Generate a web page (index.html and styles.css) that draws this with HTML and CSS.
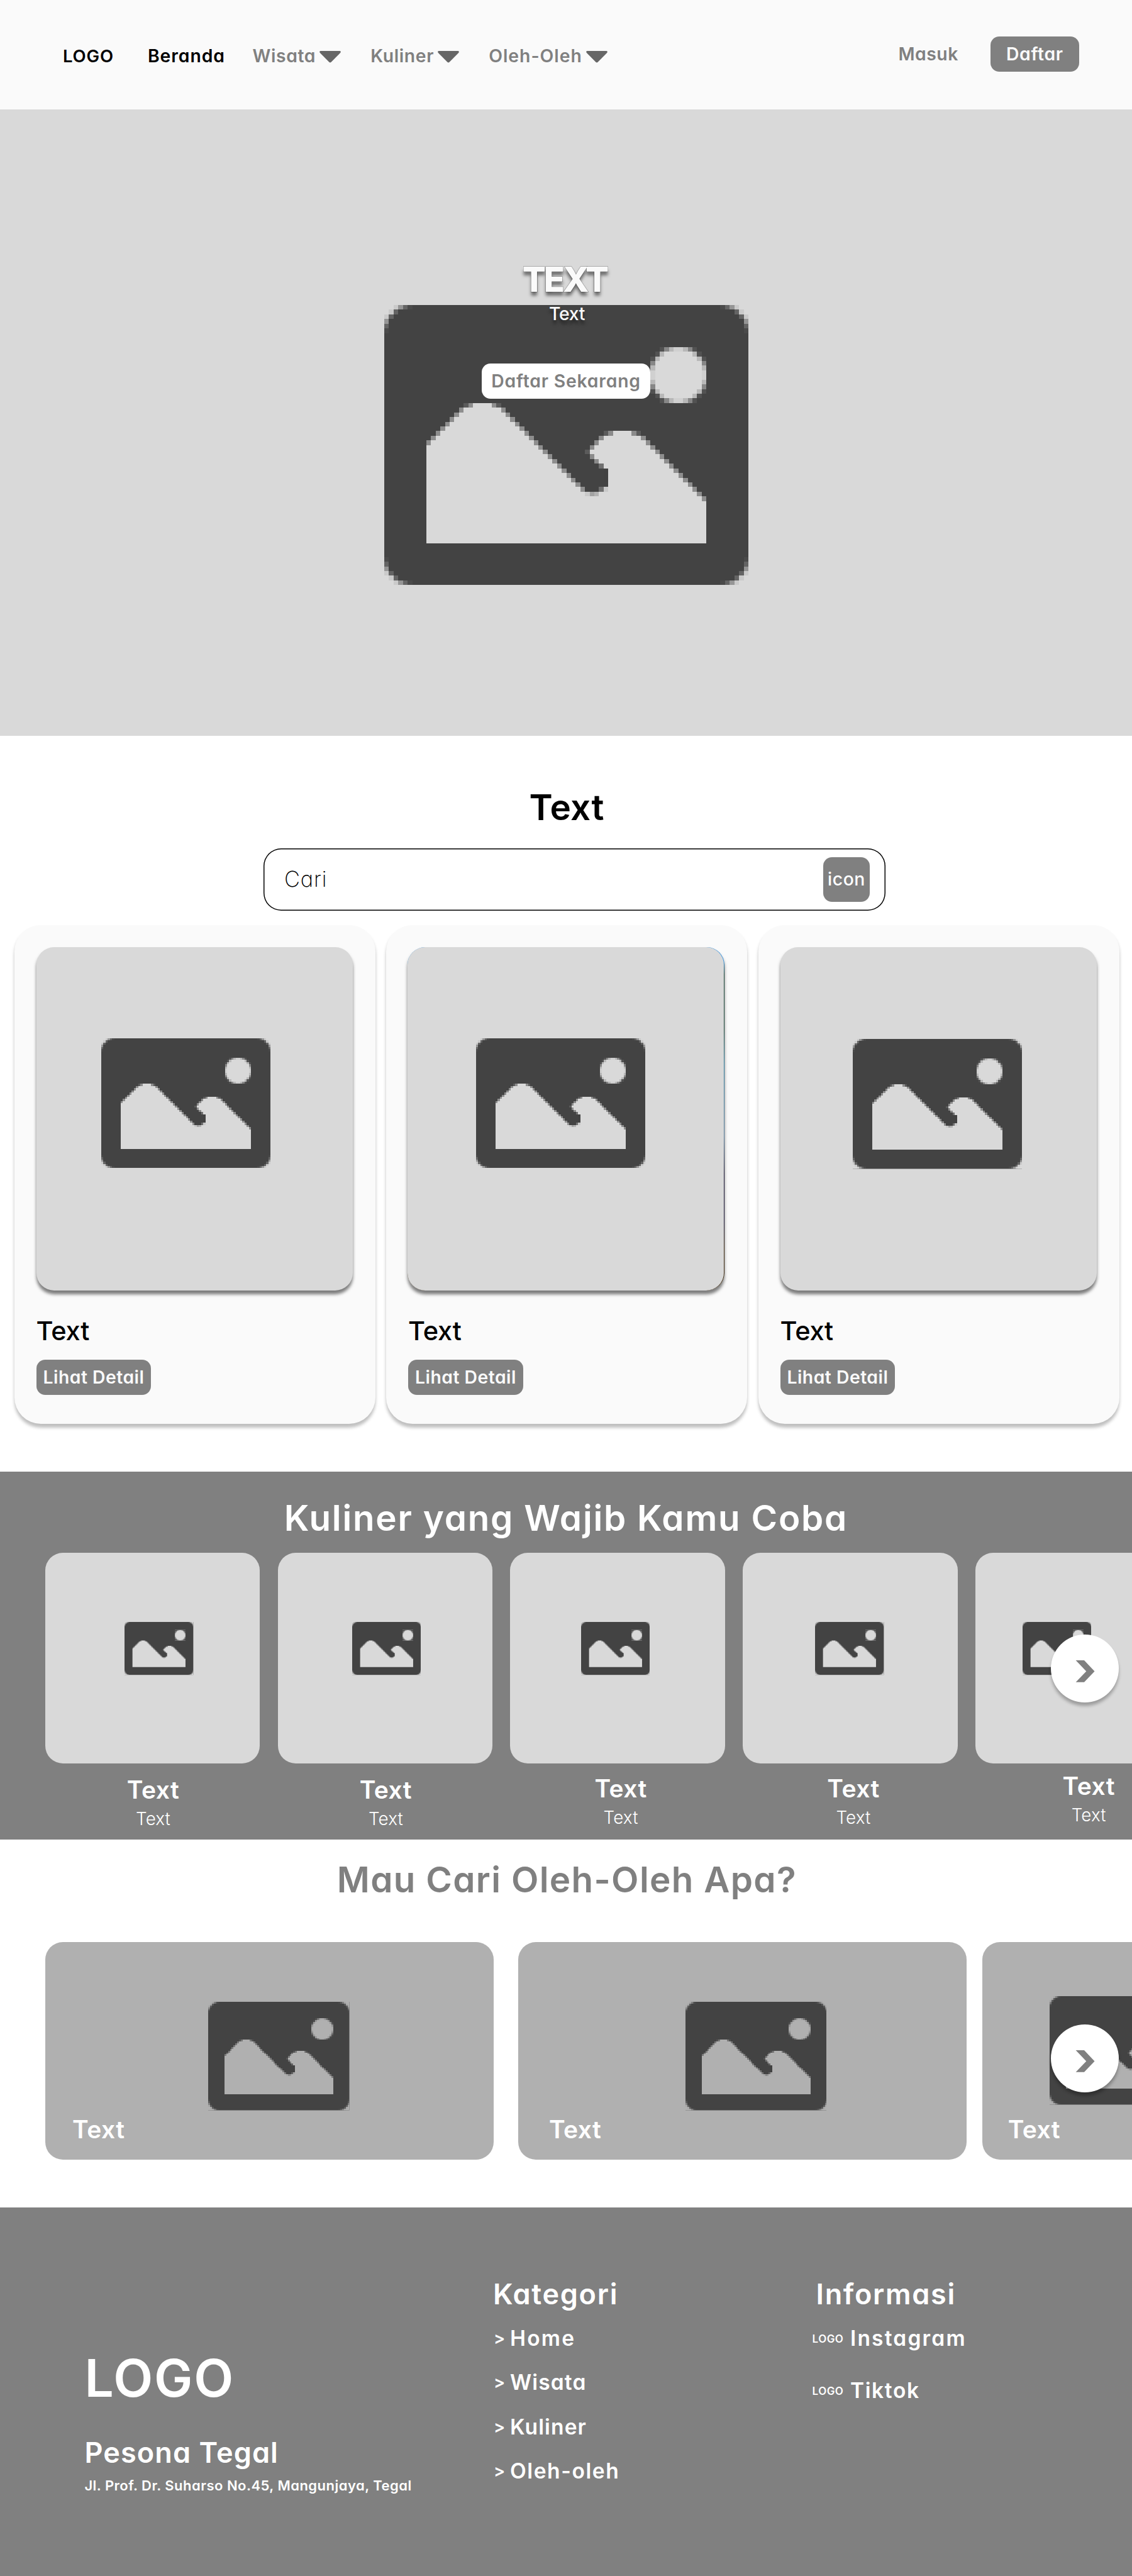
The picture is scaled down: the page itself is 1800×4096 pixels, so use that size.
FILE: index.html
```html
<!DOCTYPE html>
<html lang="id">
<head>
<meta charset="utf-8">
<title>Pesona Tegal</title>
<link rel="stylesheet" href="styles.css">
</head>
<body>
<svg class="defs" aria-hidden="true">
  <defs>
    <!-- stepped quarter-round corner on the 78x60 icon grid -->
    <g id="corner">
      <path d="M0 0h2v1h-1v1h-1z"/>
      <path opacity=".9" d="M2 0h1v1h-1zM0 2h1v1h-1zM1 1h1v1h-1z"/>
      <path opacity=".55" d="M3 0h1v1h-1zM0 3h1v1h-1z"/>
      <path opacity=".22" d="M4 0h1v1h-1zM0 4h1v1h-1zM2 1h1v1h-1zM1 2h1v1h-1z"/>
      <path opacity=".05" d="M5 0h1v1h-1zM0 5h1v1h-1z"/>
    </g>
    <symbol id="photo" viewBox="0 0 78 60" preserveAspectRatio="none">
      <rect width="78" height="60" fill="#434343"/>
      <g fill="currentColor">
        <use href="#corner"/>
        <use href="#corner" transform="translate(78 0) scale(-1 1)"/>
        <use href="#corner" transform="translate(0 60) scale(1 -1)"/>
        <use href="#corner" transform="translate(78 60) scale(-1 -1)"/>
        <rect x="57" y="9" width="12" height="12"/>
        <path d="M9 51V30H10V29H11V28H12V27H13V26H14V25H15V24H16V23H17V22H19V21H23V22H25V23H26V24H27V25H28V26H29V27H30V28H31V29H32V30H33V31H34V32H35V33H36V34H37V35H38V36H39V37H40V38H41V39H42V40H47V39H48V35H47V34H46V33H45V32H44V31H45V30H46V29H47V28H49V27H53V28H55V29H56V30H57V31H58V32H59V33H60V34H61V35H62V36H63V37H64V38H65V39H66V40H67V41H68V42H69V51Z"/>
        <path opacity=".5" d="M9 29h1v1h-1zm1-1h1v1h-1zm1-1h1v1h-1zm1-1h1v1h-1zm1-1h1v1h-1zm1-1h1v1h-1zm1-1h1v1h-1zm1-1h1v1h-1zm2-1h1v1h-1z"/>
        <path opacity=".5" d="M23 21h1v1h-1zm2 1h1v1h-1zm1 1h1v1h-1zm1 1h1v1h-1zm1 1h1v1h-1zm1 1h1v1h-1zm1 1h1v1h-1zm1 1h1v1h-1zm1 1h1v1h-1zm1 1h1v1h-1zm1 1h1v1h-1zm1 1h1v1h-1zm1 1h1v1h-1zm1 1h1v1h-1zm1 1h1v1h-1zm1 1h1v1h-1zm1 1h1v1h-1zm1 1h1v1h-1zm1 1h1v1h-1z"/>
        <path opacity=".5" d="M55 28h1v1h-1zm1 1h1v1h-1zm1 1h1v1h-1zm1 1h1v1h-1zm1 1h1v1h-1zm1 1h1v1h-1zm1 1h1v1h-1zm1 1h1v1h-1zm1 1h1v1h-1zm1 1h1v1h-1zm1 1h1v1h-1zm1 1h1v1h-1zm1 1h1v1h-1zm1 1h1v1h-1z"/>
        <path opacity=".48" d="M48 27h1v1h-1zM53 27h1v1h-1zM46 28h1v1h-1zM45 29h1v1h-1zM44 30h1v1h-1zM44 32h1v1h-1zM45 33h1v1h-1z"/>
        <path opacity=".3" d="M46 34h1v1h-1zM46 39h1v1h-1z"/>
        <path opacity=".16" d="M17 21h1v1h-1zM24 21h1v1h-1zM47 27h1v1h-1zM54 27h1v1h-1zM43 31h1v1h-1z"/>
      </g>
      <g fill="#434343">
        <path opacity=".45" d="M47 35h1v1h-1z"/>
        <path opacity=".93" d="M47 36h1v2h-1z"/>
        <path opacity=".65" d="M47 38h1v1h-1z"/>
        <path opacity=".1" d="M47 39h1v1h-1zM43 40h1v1h-1z"/>
        <path opacity=".36" d="M44 40h1v1h-1z"/>
        <path opacity=".25" d="M45 40h1v1h-1z"/>
        <use href="#corner" transform="translate(57 9)"/>
        <use href="#corner" transform="translate(69 9) scale(-1 1)"/>
        <use href="#corner" transform="translate(57 21) scale(1 -1)"/>
        <use href="#corner" transform="translate(69 21) scale(-1 -1)"/>
      </g>
    </symbol>
    <symbol id="caret" viewBox="0 0 34 19">
      <path fill="#666" d="M1.6 0H32.4Q34.8 .6 33.2 3L18.6 17.8Q17 19.2 15.4 17.8L.8 3Q-.8 .6 1.6 0Z"/>
    </symbol>
    <symbol id="next" viewBox="0 0 108.4 108.4">
      <path fill="#808080" d="M39.6 41H53L69.5 58.4 53 75.8H39.6L56.3 58.4Z"/>
    </symbol>
  </defs>
</svg>

<header class="header">
  <nav class="nav">
    <a class="brand">LOGO</a>
    <a class="active">Beranda</a>
    <a class="drop">Wisata<svg><use href="#caret"/></svg></a>
    <a class="drop">Kuliner<svg><use href="#caret"/></svg></a>
    <a class="drop oleh">Oleh-Oleh<svg><use href="#caret"/></svg></a>
  </nav>
  <div class="account">
    <a class="login">Masuk</a>
    <a class="button signup">Daftar</a>
  </div>
</header>

<section class="hero">
  <svg class="photo hero-photo"><use href="#photo"/></svg>
  <div class="hero-content">
    <h1>TEXT</h1>
    <p>Text</p>
    <a class="button hero-button">Daftar Sekarang</a>
  </div>
</section>

<section class="wisata">
  <h2>Text</h2>
  <div class="search"><span class="placeholder">Cari</span><span class="button search-button">icon</span></div>
  <div class="places">
    <article class="place">
      <div class="thumb"><svg class="photo"><use href="#photo"/></svg></div>
      <h3>Text</h3>
      <a class="button detail">Lihat Detail</a>
    </article>
    <article class="place">
      <div class="edge"><div class="thumb"><svg class="photo"><use href="#photo"/></svg></div></div>
      <h3>Text</h3>
      <a class="button detail">Lihat Detail</a>
    </article>
    <article class="place">
      <div class="thumb"><svg class="photo"><use href="#photo"/></svg></div>
      <h3>Text</h3>
      <a class="button detail">Lihat Detail</a>
    </article>
  </div>
</section>

<section class="kuliner">
  <h2>Kuliner yang Wajib Kamu Coba</h2>
  <div class="foods">
    <article class="food"><div class="plate"><svg class="photo"><use href="#photo"/></svg></div><div class="label"><h3>Text</h3><p>Text</p></div></article>
    <article class="food"><div class="plate"><svg class="photo"><use href="#photo"/></svg></div><div class="label"><h3>Text</h3><p>Text</p></div></article>
    <article class="food"><div class="plate"><svg class="photo"><use href="#photo"/></svg></div><div class="label"><h3>Text</h3><p>Text</p></div></article>
    <article class="food"><div class="plate"><svg class="photo"><use href="#photo"/></svg></div><div class="label"><h3>Text</h3><p>Text</p></div></article>
    <article class="food"><div class="plate"><svg class="photo"><use href="#photo"/></svg></div><div class="label"><h3>Text</h3><p>Text</p></div></article>
  </div>
  <svg class="next"><use href="#next"/></svg>
</section>

<section class="gifts-section">
  <h2>Mau Cari Oleh-Oleh Apa?</h2>
  <div class="gifts">
    <article class="gift"><svg class="photo"><use href="#photo"/></svg><h3>Text</h3></article>
    <article class="gift"><svg class="photo"><use href="#photo"/></svg><h3>Text</h3></article>
    <article class="gift"><svg class="photo"><use href="#photo"/></svg><h3>Text</h3></article>
  </div>
  <svg class="next"><use href="#next"/></svg>
</section>

<footer class="footer">
  <div class="about">
    <div class="footer-logo">LOGO</div>
    <h4>Pesona Tegal</h4>
    <p>Jl. Prof. Dr. Suharso No.45, Mangunjaya, Tegal</p>
  </div>
  <div class="links">
    <h4>Kategori</h4>
    <a class="home"><span>&gt;</span>Home</a>
    <a><span>&gt;</span>Wisata</a>
    <a><span>&gt;</span>Kuliner</a>
    <a class="oleh"><span>&gt;</span>Oleh-oleh</a>
  </div>
  <div class="social">
    <h4>Informasi</h4>
    <a class="instagram"><small>LOGO</small>Instagram</a>
    <a><small>LOGO</small>Tiktok</a>
  </div>
</footer>
</body>
</html>
```
FILE: styles.css
```css
* { box-sizing: border-box; margin: 0; padding: 0; }

body {
  width: 1800px;
  background: #fff;
  color: #000;
  font-family: Inter, "Open Sans", sans-serif;
  font-feature-settings: "cv11";
  font-size: 28.3px;
  font-weight: 600;
  line-height: 40px;
  overflow-x: hidden;
}

a, h1, h2, h3, h4, p, span, small { white-space: nowrap; }
svg { display: block; flex: none; }
.defs { position: absolute; width: 0; height: 0; }
.photo { color: #d9d9d9; shape-rendering: crispEdges; }

.button {
  display: flex;
  align-items: center;
  justify-content: center;
  border-radius: 14px;
  background: #808080;
  color: #fafafa;
}

/* Header */
.header {
  display: flex;
  justify-content: space-between;
  height: 174.4px;
  padding: 0 84.4px 0 100px;
  background: #fafafa;
  color: #808080;
}
.nav { display: flex; padding-top: 68.8px; }
.brand { margin-right: 54px; color: #000; font-size: 27.5px; letter-spacing: .0302em; }
.active { margin-right: 43.5px; color: #000; letter-spacing: .034em; }
.drop { display: flex; gap: 6.2px; margin-right: 47px; letter-spacing: .022em; }
.drop.oleh { letter-spacing: .0355em; }
.drop svg { width: 34px; height: 19px; margin-top: 12.4px; }
.account { display: flex; gap: 51.2px; padding-top: 57.7px; }
.login { line-height: 56.2px; letter-spacing: .0191em; }
.signup { width: 140.6px; height: 56.2px; letter-spacing: .0247em; }

/* Hero */
.hero { position: relative; height: 995.6px; background: #d9d9d9; }
.hero-photo { position: absolute; left: 611.2px; top: 310.8px; width: 579px; height: 445.3px; }
.hero-content {
  position: relative;
  display: flex;
  flex-direction: column;
  align-items: center;
  padding-top: 240.1px;
  color: #fafafa;
}
.hero h1 {
  margin-left: -4px;
  font-size: 54.7px;
  line-height: 60px;
  font-weight: 800;
  letter-spacing: -.0569em;
  -webkit-text-stroke: 1px #808080;
  paint-order: stroke fill;
  text-shadow: 0 5.6px 5.6px rgba(0, 0, 0, .5);
}
.hero p {
  margin-top: 4.2px;
  padding-left: 3px;
  font-weight: 550;
  letter-spacing: -.0087em;
  text-shadow: 0 5.6px 5.6px rgba(0, 0, 0, .5);
}
.hero-button {
  width: 267.6px;
  height: 56px;
  margin-top: 59.4px;
  background: #fff;
  color: #808080;
  letter-spacing: .0292em;
}

/* Section headings */
h2 {
  font-size: 56.5px;
  font-weight: 600;
  line-height: 70px;
  text-align: center;
}

/* Wisata */
.wisata { padding: 79.4px 20.5px 76.3px 22.6px; }
.wisata h2 { letter-spacing: .005em; }
.search {
  display: flex;
  align-items: center;
  justify-content: space-between;
  width: 989px;
  height: 99.8px;
  margin: 29.2px 0 0 396.4px;
  padding: 0 25.2px 0 33px;
  border-radius: 28px;
  box-shadow: inset 0 0 0 1.5px #000;
}
.placeholder { font-size: 34.5px; font-weight: 250; letter-spacing: .022em; }
.search-button { width: 73.7px; height: 70.4px; color: #fff; font-weight: 550; letter-spacing: .0217em; }
.places { display: flex; justify-content: space-between; margin-top: 22.6px; }
.place {
  width: 574px;
  height: 792.7px;
  padding: 35px 35px 0;
  border-radius: 42px;
  background: #fafafa;
  box-shadow: 0 5.6px 5.6px rgba(0, 0, 0, .25);
}
.thumb {
  width: 503.8px;
  height: 545.7px;
  padding: 144.8px 0 0 103.7px;
  border-radius: 28px;
  background: #d9d9d9;
  box-shadow: 0 5.6px 5.6px rgba(0, 0, 0, .5);
}
.edge {
  width: 504.8px;
  margin-left: -1.5px;
  border-radius: 28px;
  background: linear-gradient(#3b93dc 0 4%, #1d4a3c 8% 24%, #2f7f9f 34%, #5a7f9c 55%, #1d1a38 66% 80%, #3d2a12 88%);
  box-shadow: 0 5.6px 5.6px rgba(0, 0, 0, .5);
}
.edge .thumb { width: 503.2px; padding-left: 109.8px; box-shadow: none; }
.place:nth-child(3) .thumb { padding: 146.4px 0 0 115.1px; }
.place .photo { width: 269px; height: 206.6px; }
.place h3 {
  margin-top: 39.6px;
  font-size: 41.5px;
  font-weight: 500;
  line-height: 50px;
  letter-spacing: -.0047em;
}
.detail { width: 182.8px; height: 55.9px; margin-top: 20.4px; letter-spacing: .0178em; }

/* Kuliner */
.kuliner {
  position: relative;
  height: 584.8px;
  padding: 38.7px 0 0 71.7px;
  overflow: hidden;
  background: #808080;
  color: #fff;
}
.kuliner h2 { margin-left: -71.7px; letter-spacing: .0316em; }
.foods { display: flex; gap: 28.2px; margin-top: 20.8px; }
.food { flex: none; width: 341.7px; }
.plate {
  height: 334.6px;
  padding: 109.7px 0 0 126.5px;
  border-radius: 28px;
  background: #d9d9d9;
}
.plate .photo { width: 109.6px; height: 84.4px; shape-rendering: auto; }
.food:nth-child(2) .plate { padding-left: 118.3px; }
.food:nth-child(3) .plate { padding-left: 112.3px; }
.food:nth-child(4) .plate { padding-left: 114.8px; }
.food:nth-child(5) .plate { padding-left: 74.6px; }
.label { margin-left: 2px; padding-top: 19.8px; text-align: center; }
.food:nth-child(3) .label, .food:nth-child(4) .label { margin-left: 9.6px; padding-top: 18px; }
.food:nth-child(5) .label { margin: 0 -9.2px 0 9.2px; padding-top: 13.8px; }
.label h3 { font-size: 39px; font-weight: 600; line-height: 44px; letter-spacing: .012em; }
.label p { margin-top: 6px; font-size: 27.8px; font-weight: 300; line-height: 36px; letter-spacing: .0049em; }
.next {
  position: absolute;
  left: 1670.6px;
  top: 258.9px;
  width: 108.4px;
  height: 108.4px;
  border-radius: 50%;
  background: #fff;
  box-shadow: 0 5.6px 5.6px rgba(0, 0, 0, .28);
}

/* Oleh-oleh */
.gifts-section {
  position: relative;
  height: 585.2px;
  padding: 29px 0 0 71.7px;
  overflow: hidden;
}
.gifts-section h2 { margin-left: -69px; color: #808080; letter-spacing: .0238em; }
.gifts-section .next { top: 294.2px; }
.gifts { display: flex; margin-top: 64.4px; }
.gift {
  display: flex;
  flex: none;
  flex-direction: column;
  width: 713px;
  height: 345.8px;
  margin-right: 39.6px;
  padding: 95px 0 26px 43.4px;
  border-radius: 28px;
  background: #b0b0b0;
}
.gift .photo { width: 224.5px; height: 172.5px; margin-left: 216px; color: #b0b0b0; }
.gift h3 {
  margin-top: auto;
  color: #fff;
  font-size: 39px;
  font-weight: 600;
  line-height: 44px;
  letter-spacing: .012em;
}
.gift:nth-child(2) { margin-right: 25px; padding-left: 48.6px; }
.gift:nth-child(2) .photo { margin-left: 217.1px; }
.gift:nth-child(3) { padding: 86.3px 0 26px 40.4px; }
.gift:nth-child(3) .photo { margin-left: 66.8px; }

/* Footer */
.footer {
  display: grid;
  grid-template-columns: 649.6px 513.5px 1fr;
  height: 586px;
  padding-left: 134.4px;
  background: #808080;
  color: #fff;
}
.footer h4 { font-size: 45px; font-weight: 600; line-height: 50px; letter-spacing: .0376em; }
.about { padding-top: 226.9px; }
.footer-logo { font-size: 82px; line-height: 90px; letter-spacing: .0215em; }
.about h4 { margin-top: 48px; letter-spacing: .0249em; }
.about p { margin-top: 13.9px; font-size: 22px; line-height: 26px; letter-spacing: .0218em; }
.links, .social { padding-top: 113.2px; }
.footer a { display: flex; font-size: 33.5px; line-height: 40px; letter-spacing: .034em; }
.links a { margin-top: 30.3px; }
.links .home { margin-top: 25px; letter-spacing: .066em; }
.links .oleh { letter-spacing: .0478em; }
.links span { width: 27px; padding-left: 1px; font-size: 27px; letter-spacing: 0; }
.social a { margin: 0 0 41.7px -5.9px; letter-spacing: .0484em; }
.social .instagram { margin-top: 25px; letter-spacing: .0649em; }
.social small { width: 60.4px; padding-top: 1px; font-size: 17px; letter-spacing: .025em; }
```
